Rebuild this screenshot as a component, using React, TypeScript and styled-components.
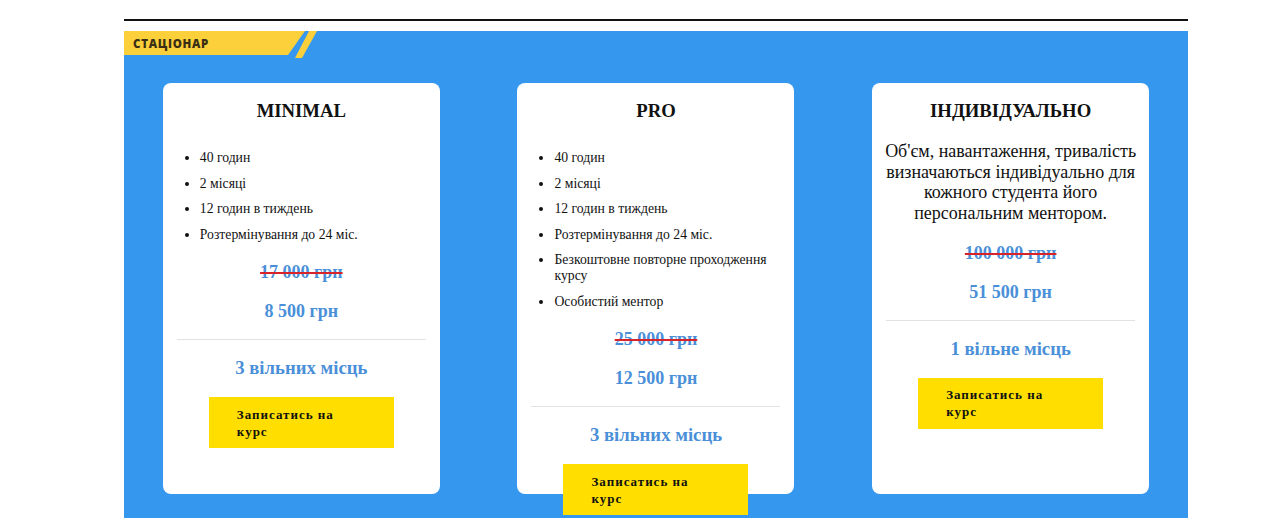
import React from "react";
import styled, { createGlobalStyle } from "styled-components";

const GlobalStyle = createGlobalStyle`
  html, body { margin: 0; padding: 0; background: #ffffff; }
  body { font-family: "Liberation Serif", "Times New Roman", serif; color: #111; }
`;

const Page = styled.div`
  width: 1064px;
  padding-left: 124px;
`;

const Rule = styled.div`
  height: 2px;
  background: #111;
  margin: 19px 0 10px;
`;

const Section = styled.section`
  background: #3598ee;
  display: flex;
  flex-direction: column;
`;

const Ribbon = styled.div`
  position: relative;
  height: 27px;
  width: 200px;
  display: flex;
  align-items: flex-start;
  &::before,
  &::after {
    content: "";
    position: absolute;
    inset: 0;
    background: #fbd03a;
  }
  &::before {
    clip-path: polygon(0 0, 181px 0, 164px 24px, 0 24px);
  }
  &::after {
    clip-path: polygon(185px 0, 193px 0, 178px 27px, 171px 27px);
  }
`;

const RibbonLabel = styled.span`
  position: relative;
  z-index: 1;
  margin: 6px 0 0 9px;
  font-family: "Open Sans", "Liberation Sans", sans-serif;
  font-weight: 800;
  font-size: 11.5px;
  line-height: 14px;
  letter-spacing: 0.7px;
  color: #3a2f14;
`;

const CardsRow = styled.div`
  display: flex;
  justify-content: space-around;
  padding: 25px 0 24px;
`;

const Card = styled.div`
  width: 277px;
  height: 411px;
  box-sizing: border-box;
  background: #fff;
  border-radius: 8px;
  padding: 17px 14px 0;
  display: flex;
  flex-direction: column;
  align-items: stretch;
`;

const Title = styled.h3`
  margin: 0;
  font-size: 18.72px;
  line-height: 22px;
  font-weight: 700;
  text-align: center;
`;

const Features = styled.ul`
  margin: 28px 0 0;
  padding-left: 23px;
  font-size: 13.7px;
  line-height: 16px;
  li {
    margin-bottom: 9.5px;
  }
`;

const Description = styled.p`
  margin: 19px -7px 9px;
  font-size: 18px;
  line-height: 20.7px;
  text-align: center;
`;

const Price = styled.div<{ $old?: boolean }>`
  margin-top: ${(p) => (p.$old ? "10px" : "18px")};
  text-align: center;
  font-size: 18px;
  line-height: 21px;
  font-weight: 700;
  color: #4a8fd8;
  text-decoration: ${(p) => (p.$old ? "line-through" : "none")};
  text-decoration-color: #d8232a;
  text-decoration-thickness: 2px;
`;

const Divider = styled.hr`
  border: none;
  border-top: 1px solid #e2e2e2;
  margin: 17px 0 0;
  width: 100%;
`;

const Seats = styled.div`
  margin-top: 17px;
  text-align: center;
  font-size: 18.72px;
  line-height: 22px;
  font-weight: 700;
  color: #4a8fd8;
`;

const EnrollButton = styled.button`
  align-self: center;
  margin-top: 18px;
  width: 185px;
  flex-shrink: 0;
  box-sizing: border-box;
  padding: 8.5px 40px 8.5px 28px;
  border: none;
  background: #ffde00;
  text-align: left;
  font-family: "Liberation Serif", "Times New Roman", serif;
  font-weight: 700;
  font-size: 13px;
  line-height: 17px;
  letter-spacing: 1px;
  color: #111;
  cursor: pointer;
`;

type Plan = {
  title: string;
  features?: string[];
  description?: string;
  oldPrice: string;
  price: string;
  seats: string;
};

const plans: Plan[] = [
  {
    title: "MINIMAL",
    features: ["40 годин", "2 місяці", "12 годин в тиждень", "Розтермінування до 24 міс."],
    oldPrice: "17 000 грн",
    price: "8 500 грн",
    seats: "3 вільних місць",
  },
  {
    title: "PRO",
    features: [
      "40 годин",
      "2 місяці",
      "12 годин в тиждень",
      "Розтермінування до 24 міс.",
      "Безкоштовне повторне проходження курсу",
      "Особистий ментор",
    ],
    oldPrice: "25 000 грн",
    price: "12 500 грн",
    seats: "3 вільних місць",
  },
  {
    title: "ІНДИВІДУАЛЬНО",
    description:
      "Об'єм, навантаження, тривалість визначаються індивідуально для кожного студента його персональним ментором.",
    oldPrice: "100 000 грн",
    price: "51 500 грн",
    seats: "1 вільне місць",
  },
];

export default function App() {
  return (
    <>
      <GlobalStyle />
      <Page>
        <Rule />
        <Section>
          <Ribbon>
            <RibbonLabel>СТАЦІОНАР</RibbonLabel>
          </Ribbon>
          <CardsRow>
            {plans.map((plan) => (
              <Card key={plan.title}>
                <Title>{plan.title}</Title>
                {plan.features && (
                  <Features>
                    {plan.features.map((f) => (
                      <li key={f}>{f}</li>
                    ))}
                  </Features>
                )}
                {plan.description && <Description>{plan.description}</Description>}
                <Price $old>{plan.oldPrice}</Price>
                <Price>{plan.price}</Price>
                <Divider />
                <Seats>{plan.seats}</Seats>
                <EnrollButton>Записатись на курс</EnrollButton>
              </Card>
            ))}
          </CardsRow>
        </Section>
      </Page>
    </>
  );
}
